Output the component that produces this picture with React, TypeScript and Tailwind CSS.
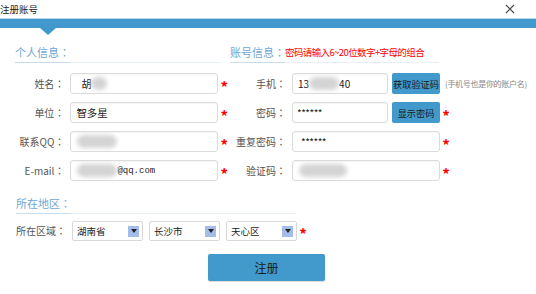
import React from 'react'

const font = { fontFamily: '"Noto Sans CJK SC", "Liberation Sans", sans-serif' }
const colonFont = { fontFamily: '"Noto Sans CJK SC", "Liberation Sans", sans-serif' }

function Colon() {
  return <span style={{ fontFamily: '"Noto Sans CJK TC", sans-serif' }}>：</span>
}

function Star() {
  return <span className="w-[12px] text-center text-[15px] font-bold leading-none text-[#ff0000] pt-[5px]">*</span>
}

function Blob({ w }: { w: number }) {
  return <span className="inline-block h-[13px] rounded-full bg-[#d4d4d4] blur-[2px]" style={{ width: w }} />
}

function Field({ children, w, pl = 'pl-[6px]' }: { children?: React.ReactNode; w: string; pl?: string }) {
  return (
    <div className={`${w} h-[21px] flex items-center whitespace-nowrap ${pl} border border-[#dcdcdc] rounded-[3px] bg-white text-[10px] leading-[12px] text-[#222] shadow-[inset_0_1px_1px_rgba(0,0,0,0.04)]`}>
      {children}
    </div>
  )
}

function Header({ title, extra, w }: { title: string; extra?: React.ReactNode; w: string }) {
  return (
    <div className={`${w} h-[19px] flex items-start whitespace-nowrap`}>
      <span className="h-[19px] border-b border-[#c9dcee] text-[11px] leading-[16px] text-[#6fa6d3]" style={colonFont}>
        {title}<Colon />
      </span>
      <span className="flex-1 h-[19px] border-b border-[#e7eff7] text-[9.5px] leading-[16px] tracking-[-0.6px] text-[#ff0000]">{extra}</span>
    </div>
  )
}

function Label({ children, w }: { children: React.ReactNode; w: string }) {
  return (
    <span className={`${w} text-right whitespace-nowrap text-[10px] leading-[12px] text-[#555]`}>
      {children}<Colon />
    </span>
  )
}

function Select({ value }: { value: string }) {
  return (
    <div className="w-[71px] h-[20px] flex items-center justify-between pl-[4px] pr-[3px] border border-[#d8d8d8] rounded-[2px] bg-white text-[9.5px] leading-[12px] text-[#222] whitespace-nowrap">
      <span>{value}</span>
      <span className="w-[11px] h-[11px] bg-[#a3bcea] flex items-center justify-center">
        <span className="w-0 h-0 border-l-[3px] border-r-[3px] border-t-[4px] border-l-transparent border-r-transparent border-t-[#222]" />
      </span>
    </div>
  )
}

function BlueBtn({ children }: { children: React.ReactNode }) {
  return (
    <span className="ml-[4px] w-[48px] h-[21px] bg-[#4199cc] rounded-[2px] text-[9.2px] leading-[12px] text-[#1a1a1a] flex items-center justify-center whitespace-nowrap">
      {children}
    </span>
  )
}

export default function App() {
  return (
    <div className="w-[536px] h-[294px] bg-white overflow-hidden" style={font}>
      <div className="h-[18px] flex items-start justify-between">
        <span className="text-[9.5px] leading-[12px] text-[#222] pt-[3px]">注册账号</span>
        <svg width="10" height="10" viewBox="0 0 10 10" className="mt-[4px] mr-[21px]">
          <path d="M1 1L9 9M9 1L1 9" stroke="#444" strokeWidth="1.1" />
        </svg>
      </div>
      <div className="relative h-[10px] border-t border-[#b9d8ee] bg-[#4198cc]">
        <span className="absolute left-[40px] top-full w-0 h-0 border-l-[8px] border-r-[8px] border-t-[7px] border-l-transparent border-r-transparent border-t-[#4198cc]" />
      </div>

      <div className="flex pt-[16px]">
        {/* 个人信息 */}
        <div className="w-[215px] ml-[15px]">
          <Header title="个人信息" w="w-[206px]" />
          <div className="mt-[10px] flex flex-col gap-[8px]">
            <div className="flex items-center">
              <Label w="w-[51px]">姓名</Label>
              <div className="ml-[6px]"><Field w="w-[148px]" pl="pl-[10px]">胡<Blob w={16} /></Field></div>
              <Star />
            </div>
            <div className="flex items-center">
              <Label w="w-[51px]">单位</Label>
              <div className="ml-[6px]"><Field w="w-[148px]" pl="pl-[5px]"><span className="text-[10.5px]">智多星</span></Field></div>
              <Star />
            </div>
            <div className="flex items-center">
              <Label w="w-[51px]">联系QQ</Label>
              <div className="ml-[6px]"><Field w="w-[148px]"><Blob w={40} /></Field></div>
              <Star />
            </div>
            <div className="flex items-center">
              <Label w="w-[51px]">E-mail</Label>
              <div className="ml-[6px]">
                <Field w="w-[148px]">
                  <Blob w={40} />
                  <span className="text-[9px]" style={{ fontFamily: '"Liberation Mono", monospace' }}>@qq.com</span>
                </Field>
              </div>
              <Star />
            </div>
          </div>
        </div>

        {/* 账号信息 */}
        <div>
          <Header title="账号信息" extra="密码请输入6~20位数字+字母的组合" w="w-[209px]" />
          <div className="mt-[10px] flex flex-col gap-[8px]">
            <div className="flex items-center">
              <Label w="w-[56px]">手机</Label>
              <div className="ml-[6px]">
                <Field w="w-[96px]" pl="pl-[5px]"><span className="text-[10px]">13</span><Blob w={30} /><span className="text-[10px]">40</span></Field>
              </div>
              <BlueBtn>获取验证码</BlueBtn>
              <span className="ml-[5px] text-[8px] leading-[10px] tracking-[-0.3px] text-[#888] whitespace-nowrap">(手机号也是你的账户名)</span>
            </div>
            <div className="flex items-center">
              <Label w="w-[56px]">密码</Label>
              <div className="ml-[6px]"><Field w="w-[96px]" pl="pl-[4px]"><span className="text-[10px] tracking-[-0.5px]">******</span></Field></div>
              <BlueBtn>显示密码</BlueBtn>
              <Star />
            </div>
            <div className="flex items-center">
              <Label w="w-[56px]">重复密码</Label>
              <div className="ml-[6px]"><Field w="w-[148px]" pl="pl-[8px]"><span className="text-[10px] tracking-[-0.5px]">******</span></Field></div>
              <Star />
            </div>
            <div className="flex items-center">
              <Label w="w-[56px]">验证码</Label>
              <div className="ml-[6px]"><Field w="w-[148px]"><Blob w={48} /></Field></div>
              <Star />
            </div>
          </div>
        </div>
      </div>

      {/* 所在地区 */}
      <div className="ml-[16px] mt-[14px]">
        <Header title="所在地区" w="w-[280px]" />
        <div className="mt-[7px] flex items-center">
          <Label w="w-[50px]">所在区域</Label>
          <div className="ml-[6px] flex gap-[6px]">
            <Select value="湖南省" />
            <Select value="长沙市" />
            <Select value="天心区" />
          </div>
          <Star />
        </div>
        <div className="mt-[13px] ml-[192px] w-[117px] h-[27px] bg-[#4199cc] rounded-[2px] flex items-center justify-center text-[12px] leading-[14px] text-[#1a1a1a] shadow-[0_1px_1px_rgba(0,0,0,0.15)]">
          注册
        </div>
      </div>
    </div>
  )
}
